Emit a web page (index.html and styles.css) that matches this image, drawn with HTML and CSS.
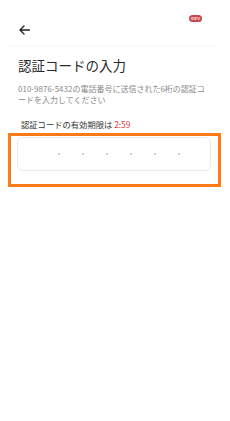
FILE: index.html
```html
<!DOCTYPE html>
<html lang="ja">
<head>
<meta charset="utf-8">
<link rel="stylesheet" href="styles.css">
</head>
<body>
<div class="screen">
  <span class="dev-badge">DEV</span>
  <header class="header">
    <svg class="back" width="11" height="10" viewBox="0 0 11 10">
      <path d="M10.5 5H1.2M5 1L1 5l4 4" fill="none" stroke="#222" stroke-width="1.3" stroke-linecap="round" stroke-linejoin="round"/>
    </svg>
  </header>
  <main class="content">
    <h1 class="title">認証コードの入力</h1>
    <p class="desc">010-9876-5432の電話番号に送信された6桁の認証コードを入力してください</p>
    <p class="timer">認証コードの有効期限は <span class="time">2:59</span></p>
    <div class="highlight">
      <div class="code-box">
        <span class="cell"><span class="dot"></span></span>
        <span class="cell"><span class="dot"></span></span>
        <span class="cell"><span class="dot"></span></span>
        <span class="cell"><span class="dot"></span></span>
        <span class="cell"><span class="dot"></span></span>
        <span class="cell"><span class="dot"></span></span>
      </div>
    </div>
  </main>
</div>
</body>
</html>
```
FILE: styles.css
```css
html, body {
  margin: 0;
  padding: 0;
  background: #fff;
}
body {
  font-family: "Noto Sans CJK JP", "Noto Sans", sans-serif;
  color: #333;
}
.screen {
  position: relative;
  width: 230px;
  height: 421px;
  overflow: hidden;
}
.dev-badge {
  position: absolute;
  left: 189px;
  top: 15px;
  width: 13px;
  height: 7px;
  border-radius: 4px;
  background: #c9484b;
  color: #f6d5d5;
  font-family: "DejaVu Sans", sans-serif;
  font-size: 4px;
  font-weight: bold;
  line-height: 7px;
  text-align: center;
}
.header {
  height: 46px;
  margin: 0 11px 0 10px;
  border-bottom: 1px solid #f7f7f7;
  display: flex;
  align-items: center;
  padding-top: 2px;
  box-sizing: border-box;
}
.back {
  margin-left: 9px;
  margin-top: 12px;
}
.content {
  display: flex;
  flex-direction: column;
}
.title {
  margin: 9px 0 0 18px;
  font-size: 13.5px;
  font-weight: 400;
  line-height: 20px;
  color: #2a2a2a;
}
.desc {
  margin: 8px 18px 0 18px;
  font-size: 8px;
  line-height: 11px;
  color: #8a8a8a;
}
.timer {
  margin: 13px 0 0 21px;
  font-size: 8.3px;
  line-height: 12px;
  color: #333;
}
.time {
  color: #e0393e;
}
.highlight {
  margin: 3px 9px 0 8px;
  border: 3px solid #ff7a14;
  padding: 1px 7px 13px 6px;
}
.code-box {
  height: 34px;
  box-sizing: border-box;
  border: 1px solid #ebebeb;
  border-radius: 6px;
  display: flex;
  align-items: center;
  padding-left: 29px;
}
.cell {
  width: 24px;
  display: flex;
  justify-content: center;
  align-items: center;
}
.dot {
  width: 2px;
  height: 2px;
  border-radius: 50%;
  background: #c8c8c8;
}
```
